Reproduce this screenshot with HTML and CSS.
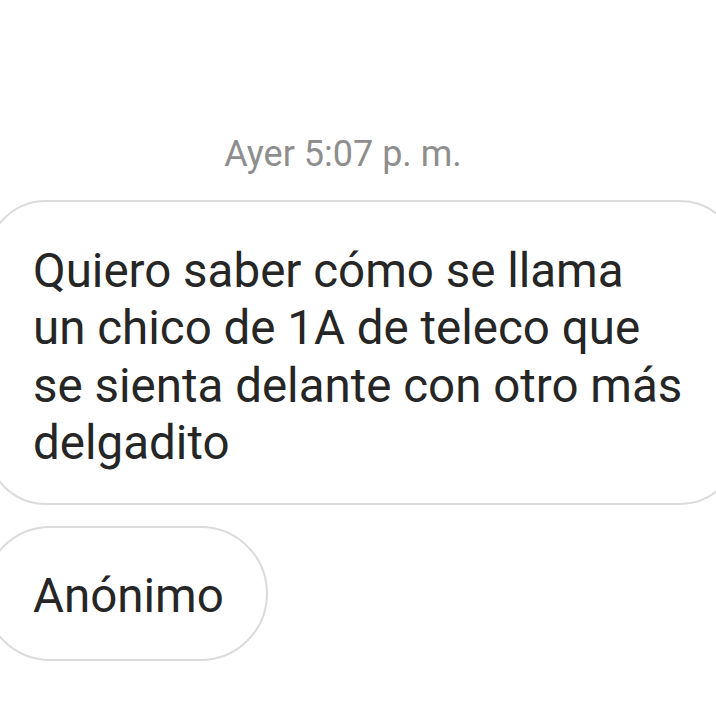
FILE: index.html
```html
<!DOCTYPE html>
<html lang="es">
<head>
<meta charset="utf-8">
<link rel="stylesheet" href="styles.css">
</head>
<body>
<main class="thread">
  <div class="time">Ayer 5:07 p. m.</div>
  <div class="bubble bubble-main">
    <p class="msg">Quiero saber cómo se llama<br>un chico de 1A de teleco que<br>se sienta delante con otro más<br>delgadito</p>
  </div>
  <div class="bubble bubble-name">
    <p class="msg">Anónimo</p>
  </div>
</main>
</body>
</html>
```
FILE: styles.css
```css
html, body {
  margin: 0;
  padding: 0;
  background: #ffffff;
  overflow: hidden;
}
.thread {
  width: 716px;
  height: 716px;
  display: flex;
  flex-direction: column;
  align-items: flex-start;
  font-family: Roboto, "Noto Sans", sans-serif;
  color: #262626;
}
.time {
  align-self: stretch;
  text-align: center;
  padding: 134px 30px 0 0;
  font-size: 36px;
  line-height: 40px;
  color: #8e8e8e;
  margin-bottom: 26px;
}
.bubble {
  box-sizing: border-box;
  border: 2px solid #dbdbdb;
  background: #fff;
}
.bubble-main {
  width: 754px;
  margin-left: -14px;
  height: 305px;
  border-radius: 60px;
  padding: 41px 0 0 45px;
}
.bubble-name {
  margin-top: 21px;
  margin-left: -17px;
  width: 285px;
  height: 135px;
  border-radius: 68px;
  padding: 6px 0 0 48px;
  display: flex;
  align-items: center;
}
.msg {
  margin: 0;
  font-size: 47.5px;
  line-height: 57.3px;
  color: #262626;
}
```
